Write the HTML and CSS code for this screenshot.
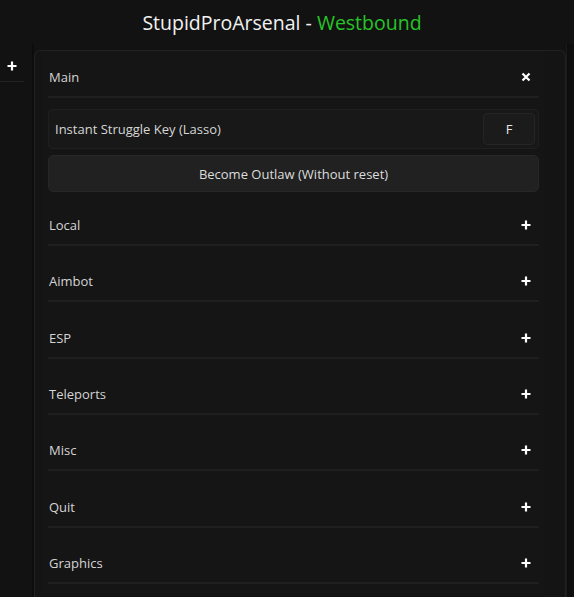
FILE: index.html
```html
<!DOCTYPE html>
<html>
<head>
<meta charset="utf-8">
<link rel="stylesheet" href="styles.css">
</head>
<body>
<header class="title">StupidProArsenal - <span class="accent">Westbound</span></header>
<div class="main">
  <aside class="side">
    <div class="side-head">
      <svg class="icon" width="10" height="10" viewBox="0 0 10 10"><path d="M5 0.5v9M0.5 5h9" stroke="#fff" stroke-width="2.2"/></svg>
    </div>
  </aside>
  <section class="window">
    <div class="section open">
      <div class="sec-head"><span>Main</span>
        <svg class="icon" width="10" height="10" viewBox="0 0 10 10"><path d="M1.5 1.5l7 7M8.5 1.5l-7 7" stroke="#fff" stroke-width="2.2"/></svg>
      </div>
      <div class="sec-body">
        <div class="keyrow"><span>Instant Struggle Key (Lasso)</span><span class="key">F</span></div>
        <div class="btn">Become Outlaw (Without reset)</div>
      </div>
    </div>
    <div class="section"><div class="sec-head"><span>Local</span><svg class="icon" width="10" height="10" viewBox="0 0 10 10"><path d="M5 0.5v9M0.5 5h9" stroke="#fff" stroke-width="2.2"/></svg></div></div>
    <div class="section"><div class="sec-head"><span>Aimbot</span><svg class="icon" width="10" height="10" viewBox="0 0 10 10"><path d="M5 0.5v9M0.5 5h9" stroke="#fff" stroke-width="2.2"/></svg></div></div>
    <div class="section"><div class="sec-head"><span>ESP</span><svg class="icon" width="10" height="10" viewBox="0 0 10 10"><path d="M5 0.5v9M0.5 5h9" stroke="#fff" stroke-width="2.2"/></svg></div></div>
    <div class="section"><div class="sec-head"><span>Teleports</span><svg class="icon" width="10" height="10" viewBox="0 0 10 10"><path d="M5 0.5v9M0.5 5h9" stroke="#fff" stroke-width="2.2"/></svg></div></div>
    <div class="section"><div class="sec-head"><span>Misc</span><svg class="icon" width="10" height="10" viewBox="0 0 10 10"><path d="M5 0.5v9M0.5 5h9" stroke="#fff" stroke-width="2.2"/></svg></div></div>
    <div class="section"><div class="sec-head"><span>Quit</span><svg class="icon" width="10" height="10" viewBox="0 0 10 10"><path d="M5 0.5v9M0.5 5h9" stroke="#fff" stroke-width="2.2"/></svg></div></div>
    <div class="section"><div class="sec-head"><span>Graphics</span><svg class="icon" width="10" height="10" viewBox="0 0 10 10"><path d="M5 0.5v9M0.5 5h9" stroke="#fff" stroke-width="2.2"/></svg></div></div>
  </section>
  <div class="edge"></div>
</div>
</body>
</html>
```
FILE: styles.css
```css
html, body {
  margin: 0;
  height: 100%;
  overflow: hidden;
}
body {
  background: #121212;
  font-family: "Open Sans", "Noto Sans", sans-serif;
  color: #d6d6d6;
}
.title {
  height: 44px;
  display: flex;
  align-items: center;
  justify-content: center;
  font-size: 19.5px;
  color: #f2f2f2;
  white-space: pre;
  padding-right: 10px;
  box-sizing: border-box;
}
.accent {
  color: #26c526;
}
.main {
  display: flex;
  height: calc(100% - 44px);
}
.side {
  width: 32px;
  border-right: 2px solid #0c0c0c;
  padding-top: 6px;
}
.side-head {
  width: 24px;
  height: 32px;
  border-bottom: 1px solid #232323;
  display: flex;
  align-items: center;
  justify-content: flex-end;
  padding-right: 7px;
  box-sizing: border-box;
}
.window {
  margin-top: 6px;
  width: 532px;
  box-sizing: border-box;
  background: #141414;
  border: 1px solid #222;
  border-bottom: none;
  border-radius: 6px 6px 0 0;
  padding: 0 20px 0 7px;
  overflow: hidden;
}
.section {
  padding: 7px 6px 9.33px;
  background: #151515;
}
.section.open {
  padding-bottom: 7px;
}
.sec-head {
  height: 38px;
  display: flex;
  align-items: center;
  justify-content: space-between;
  padding: 0 8px 0 1px;
  border-bottom: 2px solid #1f1f1f;
  font-size: 13px;
  color: #d4d4d4;
}
.icon {
  display: block;
}
.sec-body {
  padding-top: 11px;
  display: flex;
  flex-direction: column;
  gap: 6px;
}
.keyrow {
  height: 40px;
  box-sizing: border-box;
  background: #181818;
  border: 1px solid #1f1f1f;
  border-radius: 4px;
  display: flex;
  align-items: center;
  justify-content: space-between;
  padding: 0 3px 0 6px;
  font-size: 13px;
  color: #d6d6d6;
}
.key {
  width: 52px;
  height: 32px;
  box-sizing: border-box;
  background: #1b1b1b;
  border: 1px solid #252525;
  border-radius: 4px;
  display: flex;
  align-items: center;
  justify-content: center;
  color: #e6e6e6;
}
.btn {
  height: 37px;
  box-sizing: border-box;
  background: #212121;
  border: 1px solid #272727;
  border-radius: 5px;
  display: flex;
  align-items: center;
  justify-content: center;
  font-size: 13px;
  color: #dcdcdc;
}
.edge {
  flex: 1;
  background: #0e0e0e;
  border-left: 1px solid #1a1a1a;
}
```
